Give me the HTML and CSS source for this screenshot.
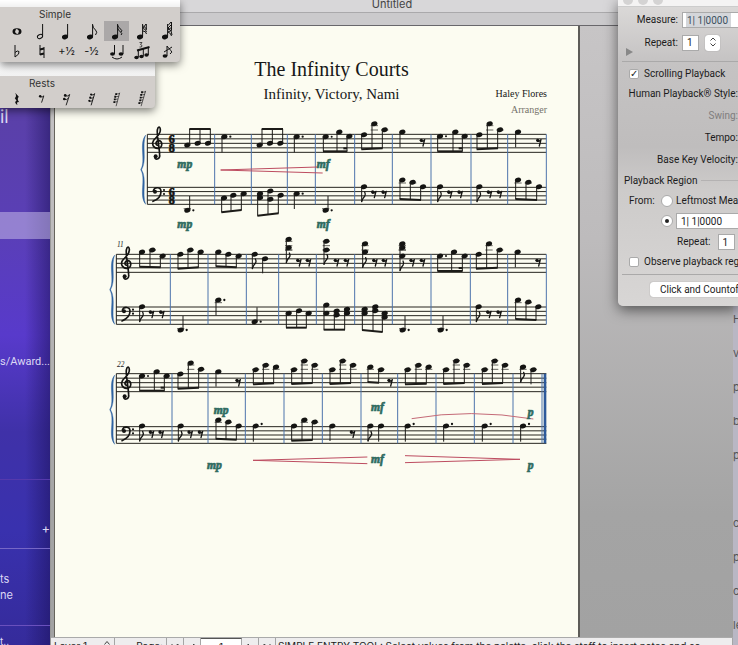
FILE: index.html
```html
<!DOCTYPE html>
<html lang="en">
<head>
<meta charset="utf-8">
<title>Untitled</title>
<link rel="stylesheet" href="styles.css">
</head>
<body>
<svg class="defs" aria-hidden="true">
  <defs>
    <g id="stem-note"><ellipse cx="6" cy="16" rx="3.1" ry="2.3" transform="rotate(-20 6 16)"/><path class="ln" d="M8.6 15.500V3"/></g>
    <g id="rest-tail"><circle cx="6" cy="7" r="1.4"/><path class="ln" d="M6 7.500Q8.500 8.500 10 6.500L7.500 14"/></g>
  </defs>
</svg>
<div class="desktop">
  <aside class="mail">
    <h2 class="mail-title">il</h2>
    <div class="mail-selected"></div>
    <p class="mail-award">s/Award...</p>
    <div class="mail-rule faint"></div>
    <div class="mail-plus">+</div>
    <div class="mail-rule"></div>
    <p class="mail-lines">ts<br>ne</p>
    <div class="mail-rule last"></div>
    <p class="mail-end">t..</p>
  </aside>

  <main class="window">
    <header class="titlebar">Untitled</header>
    <div class="ruler"></div>
    <div class="canvas">
      <article class="paper">
        <header class="heading">
          <h1>The Infinity Courts</h1>
          <p class="subtitle">Infinity, Victory, Nami</p>
          <p class="composer">Haley Flores</p>
          <p class="arranger">Arranger</p>
        </header>
        <svg class="score" id="score" viewBox="0 0 1569 1071" role="img" aria-label="Piano score, three systems"></svg>
      </article>
    </div>
    <footer class="status">
      <button class="layer">Layer 1 <svg viewBox="0 0 8 12"><path d="M1.500 4.500L4 1.500L6.500 4.500M1.500 8L4 11L6.500 8"/></svg></button>
      <label class="page-label" for="page">Page:</label>
      <button class="nav" aria-label="First page"><svg viewBox="0 0 8 8"><path d="M1 0v8M7 0L2 4l5 4z"/></svg></button>
      <button class="nav" aria-label="Previous page"><svg viewBox="0 0 8 8"><path d="M6 0L2 4l4 4z"/></svg></button>
      <input id="page" value="1">
      <button class="nav" aria-label="Next page"><svg viewBox="0 0 8 8"><path d="M2 0l4 4l-4 4z"/></svg></button>
      <button class="nav" aria-label="Last page"><svg viewBox="0 0 8 8"><path d="M7 0v8M1 0l5 4l-5 4z"/></svg></button>
      <span class="hint">SIMPLE ENTRY TOOL: Select values from the palette, click the staff to insert notes and so</span>
    </footer>
  </main>

  <aside class="behind">
    <span>H</span><span>va</span><span>pe</span><span>b</span><span>p</span><span></span><span>c</span><span>p</span><span>c</span><span>le</span>
  </aside>
</div>

<section class="palette rests">
  <div class="bar"></div>
  <h3>Rests</h3>
  <div class="cells">
    <button aria-label="Quarter rest"><svg viewBox="0 0 16 20"><path d="M6 3L10 7.500Q7.500 10 10.500 13.500Q7 12.500 8.500 17Q4 13.500 7.500 12L5.500 9Q8 7 6 3Z"/></svg></button>
    <button aria-label="Eighth rest"><svg viewBox="0 0 16 20"><use href="#rest-tail"/></svg></button>
    <button aria-label="Sixteenth rest"><svg viewBox="0 0 16 20"><circle cx="6" cy="6" r="1.500"/><circle cx="5" cy="10" r="1.500"/><path class="ln" d="M6 6.500Q9 7.500 11 5L7 17M5 10.500Q8 11.500 9.500 9"/></svg></button>
    <button aria-label="Thirty-second rest"><svg viewBox="0 0 16 20"><g><circle cx="7" cy="5" r="1.200"/><circle cx="6" cy="8.500" r="1.200"/><circle cx="5" cy="12" r="1.200"/></g><path class="ln" d="M7 5.500Q9.500 6 11 4L7 17M6 9Q8.500 9.500 10 8M5 12.500Q7.500 13 9 11"/></svg></button>
    <button aria-label="Sixty-fourth rest"><svg viewBox="0 0 16 20"><path class="ln thin" d="M11 3L7 18M7 4.500L11 4M6 7.500L10 7M5.500 10.500L9 10M4.500 13.500L8.500 13"/><path d="M6 3.500h2v2h-2zM5 6.500h2v2h-2zM4.500 9.500h2v2h-2zM4 12.500h2v2h-2z"/></svg></button>
    <button aria-label="128th rest"><svg viewBox="0 0 16 20"><path class="ln thin" d="M12 1L7 18M8 2.500L12 2M7 5.500L11 5M6.500 8.500L10 8M5.500 11.500L9 11M4.500 14.500L8 14"/><path d="M7 1.500h2v2h-2zM6 4.500h2v2h-2zM5.500 7.500h2v2h-2zM5 10.500h2v2h-2zM4 13.500h2v2h-2z"/></svg></button>
  </div>
</section>

<section class="palette simple">
  <div class="bar"></div>
  <h3>Simple</h3>
  <div class="cells">
    <button aria-label="Whole note"><svg viewBox="0 0 16 20"><path fill-rule="evenodd" d="M3.500 10.500a4.500 3.200 0 1 0 9 0a4.500 3.200 0 1 0 -9 0M6.500 9.500a1.600 2 -25 1 0 3 2a1.600 2 -25 1 0 -3 -2"/></svg></button>
    <button aria-label="Half note"><svg viewBox="0 0 16 20"><ellipse class="ln" cx="6" cy="15.500" rx="2.700" ry="1.900" transform="rotate(-25 6 15.500)"/><path class="ln" d="M8.600 15V3"/></svg></button>
    <button aria-label="Quarter note"><svg viewBox="0 0 16 20"><use href="#stem-note"/></svg></button>
    <button aria-label="Eighth note"><svg viewBox="0 0 16 20"><use href="#stem-note"/><path class="ln" d="M8.600 4Q9 7 11.500 9T11.500 14"/></svg></button>
    <button class="selected" aria-label="Sixteenth note"><svg viewBox="0 0 16 20"><use href="#stem-note"/><path class="ln" d="M8.600 4Q9 6 11.500 8T12 11M8.600 7Q9 9 11.500 11T12 14"/></svg></button>
    <button aria-label="Thirty-second note"><svg viewBox="0 0 16 20"><use href="#stem-note"/><path class="ln" d="M9 7L12 3M9 7.500Q12 8 12.500 11M9 10Q12 10 12.500 13M9 4.500L12.500 8M12.300 3v6"/></svg></button>
    <button aria-label="Sixty-fourth note"><svg viewBox="0 0 16 20"><use href="#stem-note"/><path class="ln" d="M9 4.500L12 1M9 7L12.500 3.500M9 9L13 6M9 11L13 9M9 7Q13 9 13 14M9 11Q12 12 12.500 15M12.500 1v8"/></svg></button>
    <button aria-label="Flat"><svg viewBox="0 0 16 20"><path class="ln" d="M6 4V16Q11 13 10 10.500Q8.500 9 6 11.500"/></svg></button>
    <button aria-label="Natural"><svg viewBox="0 0 16 20"><path class="ln" d="M6 4V14M10 6V17"/><path class="ln bold" d="M6 8.500L10 7.500M6 13.500L10 12.500"/></svg></button>
    <button>+½</button>
    <button>-½</button>
    <button aria-label="Tie"><svg viewBox="0 0 16 20"><ellipse cx="3.500" cy="13" rx="2.400" ry="1.800"/><ellipse cx="12" cy="13" rx="2.400" ry="1.800"/><path class="ln" d="M5.500 13V4M14 13V4M3 16Q8 20 13 16"/></svg></button>
    <button aria-label="Tuplet"><svg viewBox="0 0 16 20"><ellipse cx="2.500" cy="16.500" rx="2.200" ry="1.700"/><ellipse cx="7.500" cy="15.500" rx="2.200" ry="1.700"/><ellipse cx="12.500" cy="14" rx="2.200" ry="1.700"/><path class="ln" d="M4.300 16V9M9.300 15V8M14.300 14V6.500"/><path class="ln bold" d="M3 9.500L15.500 6"/><path class="ln thin" d="M5.500 1.500H8L6.500 3.500Q9 4 7.500 6L5.500 6"/></svg></button>
    <button aria-label="Grace note"><svg viewBox="0 0 16 20"><ellipse cx="6" cy="15" rx="2.400" ry="1.800"/><path class="ln" d="M8 15V5Q10 8 12 9.500T11 13M5 11L13 6"/></svg></button>
  </div>
</section>

<section class="playback">
  <div class="bar"><i></i><i></i><i></i></div>
  <form class="controls">
    <div class="row"><label class="lead" for="measure">Measure:</label><input class="wide marked" id="measure" value="1| 1|0000"></div>
    <div class="row second"><label class="lead" for="repeat">Repeat:</label><input class="tiny" id="repeat" value="1"><button type="button" class="stepper" aria-label="Step repeat"><svg viewBox="0 0 8 12"><path d="M1.500 4.500L4 2L6.500 4.500M1.500 7.500L4 10L6.500 7.500"/></svg></button></div>
    <div class="divide"><i class="triangle"></i></div>
    <div class="row check"><input type="checkbox" id="scrolling" checked><label for="scrolling">Scrolling Playback</label></div>
    <div class="row end style">Human Playback® Style:</div>
    <div class="row end dim">Swing:</div>
    <div class="row end">Tempo:</div>
    <div class="row end">Base Key Velocity:</div>
    <div class="row region">Playback Region</div>
    <div class="row from"><span class="lead-from">From:</span><input type="radio" name="from" id="leftmost"><label for="leftmost">Leftmost Measure</label></div>
    <div class="row from"><span class="lead-from"></span><input type="radio" name="from" id="at" checked aria-label="From measure"><input class="wide start" aria-label="Start measure" value="1| 1|0000"></div>
    <div class="row again"><label for="again">Repeat:</label><input class="tiny" id="again" value="1"></div>
    <div class="row check"><input type="checkbox" id="observe"><label for="observe">Observe playback region</label></div>
    <div class="divide low"></div>
    <button type="button" class="countoff">Click and Countoff...</button>
  </form>
</section>
<script src="score.js"></script>
</body>
</html>
```
FILE: styles.css
```css
* { box-sizing: border-box; }
body {
  margin: 0;
  height: 100vh;
  overflow: hidden;
  position: relative;
  font: 10px/14px Inter, sans-serif;
  color: #1c1c1c;
}
h1, h2, h3, p { margin: 0; font-weight: 400; }
button, input { font: inherit; color: inherit; margin: 0; padding: 0; border: 0; background: none; }
.defs { position: absolute; width: 0; height: 0; }

.desktop { display: grid; grid-template-columns: 50px 1fr 5px; height: 100vh; }

/* mail sidebar behind the window */
.mail {
  display: flex;
  flex-direction: column;
  min-height: 0;
  overflow: hidden;
  color: #dcd8f4;
  background:
    linear-gradient(90deg, transparent 50%, rgba(25, 15, 85, .5)),
    linear-gradient(#5a40a8 17%, #5a3fb6 35%, #583acb 52%, #3f31a8 67%, #3931ae 82%, #352b9b);
}
.mail > * { flex: none; }
.mail-title { margin-top: 106px; font-size: 18px; line-height: 22px; }
.mail-selected { height: 27px; margin-top: 84px; background: rgba(205, 195, 235, .5); }
.mail-award { margin-top: 115px; font: 11px/16px Roboto, sans-serif; white-space: nowrap; }
.mail-rule { height: 1px; margin-top: 12px; background: #7667c6; }
.mail-rule.faint { margin-top: 109px; background: #5539ac; }
.mail-plus { margin-top: 40px; text-align: right; font-size: 13px; line-height: 16px; }
.mail-lines { margin-top: 22px; font-size: 11px; line-height: 16px; }
.mail-rule.last { margin-top: 22px; background: #6a50bd; }
.mail-end { margin-top: 8px; }

/* score window */
.window { display: flex; flex-direction: column; min-width: 0; min-height: 0; border-left: 1px solid #999; background: #b3b2b1; }
.titlebar { height: 13px; flex: none; line-height: 8px; font-size: 11px; text-align: center; color: #444; background: #d8d7d9; border-bottom: 1px solid #aaa9ab; }
.ruler { height: 13px; flex: none; background: #cbcacc; border-bottom: 1px solid #68676b; }
.canvas { flex: 1; min-height: 0; overflow: hidden; padding-left: 3px; background: linear-gradient(#c7c5c6, #bdbbbc 35%, #a4a4a4 80%, #a2a2a2); }
.paper { width: 100%; max-width: 526px; height: 100%; background: #fcfcf1; border-left: 1px solid #66645c; border-right: 2px solid #5d5c58; }
.heading {
  display: grid;
  grid-template-columns: 1fr auto 1fr;
  padding: 31px 31px 0 61px;
  font-family: "Liberation Serif", serif;
  color: #171717;
}
.heading h1 { grid-column: 1 / -1; text-align: center; font-size: 20px; line-height: 24px; }
.subtitle { grid-column: 2; font-size: 15px; line-height: 26px; }
.composer { grid-column: 3; text-align: right; font-size: 10px; line-height: 26px; }
.arranger { grid-column: 3; text-align: right; font-size: 10px; line-height: 6px; color: #75736c; }
.score { display: block; width: 100%; margin-top: 7px; overflow: visible; }

.staff-line { stroke: #26251f; stroke-width: 3; }
.barline { stroke: #4d74ac; stroke-width: 3; }
.barline.final { stroke-width: 8; stroke: #2d5a9b; }
.edge, .stem { stroke: #1c1b18; stroke-width: 3; fill: none; }
.ledger { stroke: #1c1b18; stroke-width: 2; }
.beam { stroke: #1c1b18; stroke-width: 6; }
.ink { fill: #141412; }
.stroke { fill: none; stroke: #141412; stroke-width: 4; stroke-linecap: round; stroke-linejoin: round; }
.clef { stroke-width: 5; }
.brace { fill: #2e62a0; stroke: #2e62a0; stroke-width: 1; }
.hairpin { fill: none; stroke: #bd4c60; stroke-width: 3; }
.slur { fill: none; stroke: #c46a77; stroke-width: 3; }
.dynamic { font: italic 700 35px "Liberation Serif", serif; fill: #2f6b60; stroke: #2f6b60; stroke-width: 2; }
.meter { font: 700 36px "Liberation Serif", serif; fill: #141412; stroke: #141412; stroke-width: 2; text-anchor: middle; }
.number { font: italic 22px "Liberation Serif", serif; fill: #22211d; }

/* status bar runs under the bottom edge */
.status { display: flex; height: 8px; flex: none; overflow: hidden; align-items: flex-start; line-height: 16px; white-space: nowrap; background: #eeedee; border-top: 1px solid #aaa; }
.status > * { height: 16px; flex: none; border-right: 1px solid #a5a5a5; }
.status svg { width: 8px; height: 8px; fill: #444; stroke: #444; }
.layer { display: flex; justify-content: space-between; width: 64px; padding: 0 3px; line-height: 16px; }
.layer svg { height: 12px; fill: none; margin-top: 2px; }
.page-label { width: 52px; padding-right: 3px; text-align: right; }
.nav { width: 17px; padding-top: 3px; line-height: 8px; }
.status input { width: 41px; text-align: center; background: #fff; border-top: 1px solid #555; }
.status .hint { flex: 1; min-width: 0; padding-left: 2px; }

.behind { display: flex; flex-direction: column; min-height: 0; padding-top: 302px; overflow: hidden; line-height: 34px; font-size: 11px; color: #555; background: #b9b7c4; }
.behind span { height: 34px; flex: none; }

/* tool palettes float over the windows */
.palette { position: absolute; left: 0; overflow: hidden; background: #d2cecb; border-radius: 0 0 4px 0; box-shadow: 0 3px 9px rgba(0, 0, 0, .5); }
.palette .bar { background: linear-gradient(#fff, #f1f1f1); }
.simple { top: 0; width: 180px; }
.simple .bar { height: 7px; }
.rests { top: 62px; width: 155px; }
.rests .bar { height: 14px; }
.palette h3 { font-size: 10px; line-height: 14px; text-align: center; color: #333; }
.simple h3 { width: 110px; }
.rests h3 { width: 84px; }
.cells { display: grid; grid-template-columns: repeat(auto-fill, 25px); padding-left: 4px; }
.cells button { height: 20px; font-size: 11px; }
.rests .cells button { height: 18px; }
.cells svg { display: block; width: 16px; height: 20px; margin: 0 auto; fill: #111; }
.rests .cells svg { height: 18px; }
.simple { height: 62px; }
.ln { fill: none; stroke: #111; stroke-width: 1; }
.thin { stroke-width: 0.7; }
.bold { stroke-width: 2; }
.selected { background: #aba8a8; }

.playback { position: absolute; top: 0; left: 618px; right: 0; overflow: hidden; white-space: nowrap; font-family: Roboto, sans-serif; border-radius: 0 0 0 5px; background: linear-gradient(#dddbda, #c5c3c3 20%, #bfbdbd 48%, #cdcbca 62%, #d8d6d5); box-shadow: 0 4px 14px rgba(0, 0, 0, .55); }
.playback .bar { display: flex; gap: 5px; height: 7px; padding-left: 5px; background: #f4f3f3; border-bottom: 1px solid #ccc; }
.playback .bar i { width: 10px; height: 10px; margin-top: -5px; border-radius: 50%; background: #d4d3d3; }
.controls { display: flex; flex-direction: column; padding: 2px 0 9px; }
.row { display: flex; align-items: center; height: 22px; flex: none; }
.lead { width: 60px; flex: none; margin-right: 4px; text-align: right; }
.playback .wide, .playback .tiny { height: 16px; background: #fff; border: 1px solid #aaa; padding-left: 4px; }
.playback .wide { width: 90px; flex: none; }
.playback .tiny { width: 17px; flex: none; }
.playback .marked { color: #3b5060; background: linear-gradient(90deg, #fff 3px, #d4d6da 3px, #d4d6da 48px, #fff 48px); }
.second { height: 23px; }
.stepper { width: 15px; height: 16px; margin-left: 6px; background: #fff; border-radius: 3px; line-height: 8px; box-shadow: 0 0 1px #777; }
.stepper svg { width: 8px; height: 12px; fill: none; stroke: #444; }
.divide { flex: none; height: 8px; margin: 0 0 1px 4px; border-bottom: 1px solid #aaa9a9; }
.triangle { display: block; width: 0; margin: -6px 0 0 4px; border-left: 7px solid #888; border-top: 4px solid transparent; border-bottom: 4px solid transparent; }
.check { height: 21px; padding-left: 11px; gap: 5px; }
.playback input[type="checkbox"], .playback input[type="radio"] { appearance: none; display: grid; place-items: center; flex: none; width: 10px; height: 10px; background: #fff; border: 1px solid #aaa; border-radius: 2px; }
.playback input[type="radio"] { width: 12px; height: 12px; border-radius: 50%; }
input[type="checkbox"]:checked::before { content: "✓"; font: 700 10px/8px "DejaVu Sans", sans-serif; }
input[type="radio"]:checked::before { content: ""; width: 4px; height: 4px; border-radius: 50%; background: #222; }
.end { justify-content: flex-end; height: 22px; padding-top: 2px; }
.end.style { height: 20px; padding-top: 0; }
.dim { color: #7f7d7d; }
.region { height: 21px; padding-left: 6px; }
.region::after { content: ""; flex: 1; margin-left: 4px; border-top: 1px solid #b4b2b2; }
.from { height: 20px; padding-left: 11px; gap: 3px; }
.lead-from { width: 29px; flex: none; }
.again { height: 22px; padding-left: 59px; gap: 7px; }
.again + .check { height: 18px; }
.divide.low { height: 4px; margin-bottom: 7px; }
.countoff { flex: none; align-self: flex-start; width: 130px; height: 15px; margin-left: 32px; padding-left: 10px; text-align: left; background: #fff; border-radius: 3px; box-shadow: 0 0 1px #777; }
```
FILE: score.js
```js
// Units: three per page pixel. Each system has its own vertical origin.
const svg = document.getElementById("score");
const NS = "http://www.w3.org/2000/svg";

function add(parent, tag, attrs, text) {
  const el = document.createElementNS(NS, tag);
  for (const key in attrs) el.setAttribute(key, attrs[key]);
  if (text) el.textContent = text;
  parent.append(el);
  return el;
}
const path = (g, cls, d) => add(g, "path", { class: cls, d });
const asList = (y) => (Array.isArray(y) ? y : [y]);

function head(g, x, y, top, bottom) {
  add(g, "ellipse", { class: "ink", cx: x, cy: y, rx: 9.5, ry: 7, transform: `rotate(-18 ${x} ${y})` });
  for (let l = top - 13; l >= y - 3; l -= 13) path(g, "ledger", `M${x - 11} ${l}h22`);
  for (let l = bottom + 13; l <= y + 5; l += 13) path(g, "ledger", `M${x - 11} ${l}h22`);
}

// Beamed group: notes are [x, y or chord, dotted]; beam runs from b1 to b2.
function beam(g, top, bottom, notes, b1, b2, short) {
  const up = b1 < asList(notes[0][1])[0];
  const side = up ? 7 : -7;
  const x1 = notes[0][0] + side;
  const x2 = notes[notes.length - 1][0] + side;
  for (const [x, ys, dotted] of notes) {
    const list = asList(ys);
    list.forEach((y) => head(g, x, y, top, bottom));
    const end = b1 + ((b2 - b1) * (x + side - x1)) / (x2 - x1);
    path(g, "stem", `M${x + side} ${up ? Math.max(...list) : Math.min(...list)}V${end}`);
    if (dotted) add(g, "circle", { class: "ink", cx: x + 18, cy: list[0], r: 3 });
  }
  path(g, "beam", `M${x1 - 1} ${b1}L${x2 + 1} ${b2}`);
  if (short) path(g, "beam", `M${x2 - 11} ${b2 - 9}H${x2}`);
}

// Single note: kind is "q" (quarter), "d" (dotted quarter) or "e" (eighth).
function single(g, top, bottom, kind, x, ys, end) {
  const list = asList(ys);
  const up = end < list[0];
  const sx = x + (up ? 7 : -7);
  list.forEach((y) => head(g, x, y, top, bottom));
  path(g, "stem", `M${sx} ${up ? Math.max(...list) : Math.min(...list)}V${end}`);
  if (kind === "d") add(g, "circle", { class: "ink", cx: x + 18, cy: list[0] - (list[0] === 228 ? 6 : 0), r: 3.4 });
  if (kind === "e") path(g, "stroke", `M${sx} ${end}Q${sx + 2} ${end - 9} ${sx + 9} ${end - 16}Q${sx + 13} ${end - 22} ${sx + 9} ${end - 29}`);
}

function rest(g, x, y) {
  add(g, "circle", { class: "ink", cx: x - 4, cy: y - 6, r: 5 });
  path(g, "stroke", `M${x - 4} ${y - 3}Q${x + 3} ${y - 2} ${x + 6} ${y - 8}L${x + 1} ${y + 11}`);
}

function drawSystem(s) {
  const g = add(svg, "g", { transform: `translate(150 ${s.y})` });
  const [t1, t2, b1, b2] = s.lines;
  for (const [a, b] of [[t1, t2], [b1, b2]])
    for (let i = 0; i < 5; i++) path(g, "staff-line", `M${s.left} ${a + ((b - a) * i) / 4}H1324`);
  s.bars.forEach((x) => path(g, "barline", `M${x} ${t1}V${b2}`));
  if (s.final) path(g, "barline final", `M1320 ${t1}V${b2}`);
  path(g, "edge", `M${s.left} ${t1}V${b2}`);
  const bx = s.left - 5;
  path(g, "brace", `M${bx} 75C${bx - 22} 100 ${bx + 2} 152 ${bx - 15} 179C${bx + 2} 206 ${bx - 22} 258 ${bx} 283C${bx - 12} 250 ${bx + 5} 208 ${bx - 12} 179C${bx + 5} 150 ${bx - 12} 108 ${bx} 75Z`);
  const c = add(g, "g", { transform: `translate(${s.left + 31} 0)` });
  path(c, "stroke clef", "M-1 106C-9 101 -4 92 4 92C16 93 15 114 1 115C-14 116 -19 101 -12 91C-5 81 10 73 8 58C7 49 1 49 -1 60C-3 73 4 104 6 134C8 147 -5 151 -9 143");
  add(c, "circle", { class: "ink", cx: -6, cy: 139, r: 6 });
  const v = b1 - 232;
  add(c, "circle", { class: "ink", cx: -8, cy: 245 + v, r: 6 });
  path(c, "stroke clef", `M-13 ${242 + v}C-9 ${230 + v} 10 ${230 + v} 10 ${245 + v}C10 ${260 + v} -2 ${269 + v} -14 ${274 + v}`);
  add(c, "circle", { class: "ink", cx: 19, cy: 240 + v, r: 3.2 });
  add(c, "circle", { class: "ink", cx: 19, cy: 252 + v, r: 3.2 });
  if (s.meter) [["8", 99], ["8", 126], ["8", 257], ["8", 283]].forEach(([n, y], i) => add(g, "text", { class: "meter", x: 200, y }, i % 2 ? n : "6"));
  if (s.number) add(g, "text", { class: "number", x: 36, y: 50 }, s.number);
  s.hairpins.forEach((d) => path(g, "hairpin", d));
  if (s.slur) path(g, "slur", s.slur);
  s.dynamics.forEach(([n, x, y]) => add(g, "text", { class: "dynamic", x, y }, n));
  for (const [voice, a, b] of [[s.treble, t1, t2], [s.bass, b1, b2]])
    for (const [kind, ...v] of voice) {
      if (kind === "r") rest(g, ...v);
      else if (kind === "b") beam(g, a, b, ...v);
      else single(g, a, b, kind, ...v);
    }
}

[
  {
    y: -30, left: 127, meter: true, lines: [73, 127, 232, 283],
    bars: [329, 439, 547, 631, 749, 862, 978, 1098, 1208, 1324],
    treble: [
      ["b", [[247, 105], [278, 100], [309, 100]], 57, 57],
      ["d", 358, 80, 127],
      ["b", [[464, 105], [495, 100], [526, 100]], 57, 57],
      ["d", 575, 80, 127],
      ["b", [[662, 80, 1], [703, 66], [733, 79]], 124, 124, 1],
      ["b", [[777, 74], [808, 41], [839, 59]], 118, 115],
      ["q", 892, 66, 112], ["r", 953, 97],
      ["b", [[1005, 79, 1], [1051, 66], [1079, 79]], 124, 124, 1],
      ["b", [[1123, 74], [1154, 41], [1185, 59]], 118, 115],
      ["q", 1239, 66, 112], ["r", 1302, 97],
    ],
    bass: [
      ["d", 247, 301, 258],
      ["b", [[357, 264], [385, 256], [416, 251]], 307, 300],
      ["b", [[465, [251, 263]], [496, [243, 268]], [527, 256]], 317, 310],
      ["d", 575, 251, 297],
      ["d", 662, 301, 258],
      ["e", 777, 230, 275], ["r", 807, 252], ["r", 838, 252],
      ["b", [[892, 210], [923, 217], [954, 230]], 267, 270],
      ["e", 1005, 230, 275], ["r", 1035, 252], ["r", 1066, 252],
      ["e", 1123, 230, 275], ["r", 1154, 252], ["r", 1184, 252],
      ["b", [[1239, 210], [1270, 217], [1302, 230]], 267, 270],
    ],
    dynamics: [["mp", 217, 174], ["mf", 635, 174], ["mp", 217, 354], ["mf", 635, 354]],
    hairpins: ["M638 171L347 180L653 189"],
  },
  {
    y: 330, left: 34, number: "11", lines: [73, 127, 231, 283],
    bars: [196, 309, 424, 521, 634, 749, 862, 978, 1096, 1208, 1324],
    treble: [
      ["b", [[111, 66], [142, 60], [173, 78]], 110, 112],
      ["b", [[226, 73], [256, 60], [287, 66]], 116, 112],
      ["b", [[340, 66], [370, 73], [401, 78]], 109, 112],
      ["e", 449, 73, 116], ["q", 480, 86, 130],
      ["e", 551, [28, 53], 98], ["r", 582, 97], ["r", 611, 97],
      ["e", 664, [34, 60], 103], ["r", 695, 97], ["r", 725, 97],
      ["e", 780, [41, 66], 112], ["r", 810, 97], ["r", 839, 97],
      ["e", 892, [41, 53, 78], 122], ["r", 922, 97], ["r", 953, 97],
      ["b", [[1005, 78, 1], [1047, 66], [1079, 78]], 123, 123, 1],
      ["b", [[1121, 73], [1152, 41], [1184, 60]], 116, 113],
      ["q", 1238, 66, 112], ["r", 1300, 97],
    ],
    bass: [
      ["e", 111, 230, 275], ["r", 140, 252], ["r", 171, 252],
      ["d", 227, 300, 258],
      ["d", 340, 210, 256],
      ["d", 449, 275, 232],
      ["b", [[551, 250], [582, 242], [611, 250]], 293, 293],
      ["b", [[664, [225, 250]], [695, [243, 255]], [726, [238, 250]]], 299, 299],
      ["b", [[779, [238, 250]], [811, [230, 242]], [839, [250, 262]]], 300, 306],
      ["d", 893, 300, 258],
      ["d", 1007, 300, 258],
      ["e", 1121, 230, 275], ["r", 1152, 252], ["r", 1183, 252],
      ["b", [[1239, 210], [1270, 216], [1300, 230]], 267, 270],
    ],
    dynamics: [],
    hairpins: [],
  },
  {
    y: 690, left: 34, number: "22", final: true, lines: [71, 125, 230, 280],
    bars: [201, 309, 421, 537, 652, 768, 878, 993, 1108, 1224, 1311],
    treble: [
      ["b", [[111, 78, 1], [155, 65], [185, 78]], 122, 122, 1],
      ["b", [[226, 72], [257, 39], [288, 58]], 116, 113],
      ["q", 340, 65, 110], ["r", 400, 97],
      ["b", [[452, 59], [482, 46], [513, 51]], 103, 100],
      ["b", [[567, 59], [598, 33], [629, 46]], 102, 99],
      ["b", [[682, 59], [713, 33], [744, 46]], 102, 99],
      ["b", [[796, 51], [828, 59]], 96, 98], ["r", 856, 97],
      ["b", [[908, 59], [940, 46], [971, 51]], 103, 101],
      ["b", [[1023, 59], [1054, 33], [1085, 46]], 102, 99],
      ["b", [[1139, 59], [1169, 33], [1200, 46]], 102, 99],
      ["e", 1254, 51, 96], ["q", 1285, 59, 103],
    ],
    bass: [
      ["e", 111, 228, 273], ["r", 140, 252], ["r", 169, 252],
      ["e", 227, 228, 273], ["r", 256, 252], ["r", 287, 252],
      ["b", [[340, 210], [370, 216], [401, 228]], 266, 269],
      ["d", 452, 228, 275],
      ["b", [[567, 228], [598, 210], [629, 216]], 272, 270],
      ["q", 682, 228, 273], ["r", 743, 252],
      ["e", 796, 228, 273], ["q", 828, 228, 275],
      ["d", 908, 228, 275], ["d", 1023, 228, 275], ["d", 1139, 228, 275], ["d", 1254, 228, 275],
    ],
    dynamics: [["mp", 326, 192], ["mp", 306, 356], ["mf", 798, 184], ["mf", 798, 340], ["p", 1268, 198], ["p", 1268, 358]],
    hairpins: ["M787 321L444 331L787 341", "M900 317L1245 328L900 338"],
    slur: "M920 206Q1095 175 1285 207",
  },
].forEach(drawSystem);
```
